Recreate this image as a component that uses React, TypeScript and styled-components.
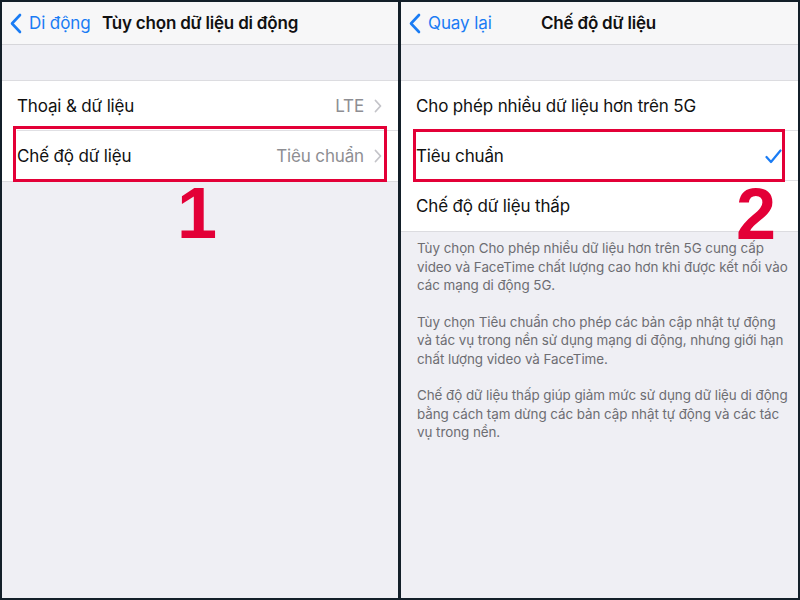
import React from "react";
import styled, { createGlobalStyle } from "styled-components";

const Global = createGlobalStyle`
  html, body { margin: 0; padding: 0; background: #131f29; }
  * { box-sizing: border-box; }
`;

const Frame = styled.div`
  width: 800px;
  height: 600px;
  background: #131f29;
  padding: 2px;
  display: grid;
  grid-template-columns: 396px 397px;
  column-gap: 3px;
  font-family: Inter, "Liberation Sans", sans-serif;
`;

const Panel = styled.div`
  position: relative;
  background: #efeff4;
  display: flex;
  flex-direction: column;
  overflow: hidden;
`;

const NavBar = styled.div`
  height: 43px;
  background: #f7f7f8;
  border-bottom: 1px solid #d6d6da;
  display: flex;
  align-items: center;
  position: relative;
  flex-shrink: 0;
`;

const Back = styled.div`
  display: flex;
  align-items: center;
  gap: 7px;
  padding-left: 8px;
  color: #1a7cf4;
  font-size: 17px;
  letter-spacing: -0.1px;
`;

const Title = styled.div<{ $left: number }>`
  position: absolute;
  left: ${(p) => p.$left}px;
  top: 0;
  height: 42px;
  display: flex;
  align-items: center;
  font-size: 17px;
  font-weight: 600;
  color: #111;
  letter-spacing: -0.2px;
`;

const Gap = styled.div`
  height: 36px;
  border-bottom: 1px solid #dcdce0;
  flex-shrink: 0;
`;

const Group = styled.div`
  background: #fff;
  border-bottom: 1px solid #dcdce0;
`;

const Row = styled.div<{ $last?: boolean }>`
  position: relative;
  height: 50px;
  display: flex;
  align-items: center;
  padding-left: 15px;
  padding-right: 16px;
  font-size: 17px;
  color: #111;
  letter-spacing: -0.15px;
  &::after {
    content: "";
    display: ${(p) => (p.$last ? "none" : "block")};
    position: absolute;
    left: 15px;
    right: 0;
    bottom: 0;
    height: 1px;
    background: #e0e0e4;
  }
`;

const Label = styled.span`
  flex: 1;
`;

const Value = styled.span`
  color: #8e8e93;
  margin-right: 10px;
`;

const Highlight = styled.div<{ $l: number; $r: number; $t: number; $b: number }>`
  position: absolute;
  left: ${(p) => p.$l}px;
  right: ${(p) => p.$r}px;
  top: ${(p) => p.$t}px;
  bottom: ${(p) => p.$b}px;
  border: 3px solid #e30037;
  pointer-events: none;
  z-index: 2;
`;

const Marker = styled.div<{ $x: number; $y: number }>`
  position: absolute;
  left: ${(p) => p.$x}px;
  top: ${(p) => p.$y}px;
  font-family: "Liberation Sans", Arial, sans-serif;
  font-weight: 700;
  font-size: 72px;
  line-height: 0.6;
  color: #e30037;
  z-index: 3;
`;

const Footer = styled.div`
  padding: 7px 15px 0 16px;
  color: #6d6d72;
  font-size: 13.4px;
  line-height: 18.5px;
  letter-spacing: -0.05px;
  display: flex;
  flex-direction: column;
  gap: 18px;
`;

const Para = styled.p`
  margin: 0;
`;

const Line = styled.span`
  display: block;
  white-space: nowrap;
`;

const BackChevron = () => (
  <svg width="12" height="21" viewBox="0 0 12 21" fill="none">
    <path d="M10 2 L2 10.5 L10 19" stroke="#1a7cf4" strokeWidth="2.6" strokeLinecap="round" strokeLinejoin="round" />
  </svg>
);

const Disclosure = () => (
  <svg width="8" height="14" viewBox="0 0 8 14" fill="none">
    <path d="M1.5 1.5 L6.5 7 L1.5 12.5" stroke="#c4c4c9" strokeWidth="1.8" strokeLinecap="round" strokeLinejoin="round" />
  </svg>
);

const Check = () => (
  <svg width="17" height="15" viewBox="0 0 17 15" fill="none">
    <path d="M1.5 8 L6 13 L15.5 1.5" stroke="#1a7cf4" strokeWidth="2.2" strokeLinecap="round" strokeLinejoin="round" />
  </svg>
);

const paragraphs = [
  [
    "Tùy chọn Cho phép nhiều dữ liệu hơn trên 5G cung cấp",
    "video và FaceTime chất lượng cao hơn khi được kết nối vào",
    "các mạng di động 5G.",
  ],
  [
    "Tùy chọn Tiêu chuẩn cho phép các bản cập nhật tự động",
    "và tác vụ trong nền sử dụng mạng di động, nhưng giới hạn",
    "chất lượng video và FaceTime.",
  ],
  [
    "Chế độ dữ liệu thấp giúp giảm mức sử dụng dữ liệu di động",
    "bằng cách tạm dừng các bản cập nhật tự động và các tác",
    "vụ trong nền.",
  ],
];

export default function App() {
  return (
    <>
      <Global />
      <Frame>
        <Panel>
          <NavBar>
            <Back>
              <BackChevron />
              <span>Di động</span>
            </Back>
            <Title $left={100}>Tùy chọn dữ liệu di động</Title>
          </NavBar>
          <Gap />
          <Group>
            <Row>
              <Label>Thoại &amp; dữ liệu</Label>
              <Value>LTE</Value>
              <Disclosure />
            </Row>
            <Row $last>
              <Label>Chế độ dữ liệu</Label>
              <Value>Tiêu chuẩn</Value>
              <Disclosure />
              <Highlight $l={11} $r={11} $t={-5} $b={-1} />
            </Row>
          </Group>
          <Marker $x={175} $y={190}>1</Marker>
        </Panel>
        <Panel>
          <NavBar>
            <Back>
              <BackChevron />
              <span>Quay lại</span>
            </Back>
            <Title $left={140}>Chế độ dữ liệu</Title>
          </NavBar>
          <Gap />
          <Group>
            <Row>
              <Label>Cho phép nhiều dữ liệu hơn trên 5G</Label>
            </Row>
            <Row>
              <Label>Tiêu chuẩn</Label>
              <Check />
              <Highlight $l={12} $r={13} $t={-2} $b={-1} />
            </Row>
            <Row $last>
              <Label>Chế độ dữ liệu thấp</Label>
            </Row>
          </Group>
          <Marker $x={335} $y={191}>2</Marker>
          <Footer>
            {paragraphs.map((p, i) => (
              <Para key={i}>
                {p.map((l, j) => (
                  <Line key={j}>{l}</Line>
                ))}
              </Para>
            ))}
          </Footer>
        </Panel>
      </Frame>
    </>
  );
}
